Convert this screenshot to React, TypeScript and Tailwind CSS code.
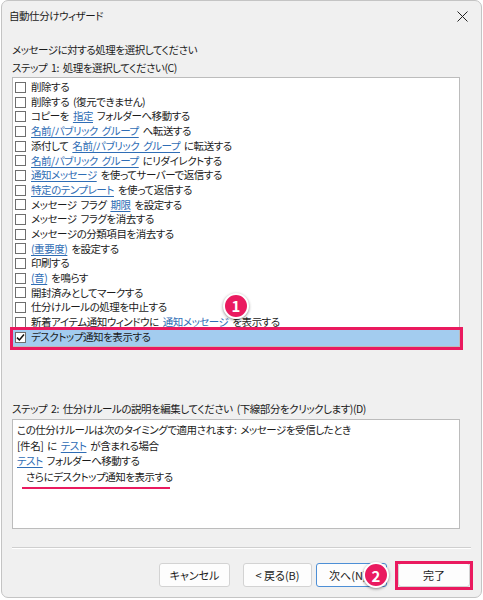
import React from "react";

type Part = { t: string; link?: boolean };

const rules: Part[][] = [
  [{ t: "削除する" }],
  [{ t: "削除する (復元できません)" }],
  [{ t: "コピーを " }, { t: "指定", link: true }, { t: " フォルダーへ移動する" }],
  [{ t: "名前/パブリック グループ", link: true }, { t: " へ転送する" }],
  [{ t: "添付して " }, { t: "名前/パブリック グループ", link: true }, { t: " に転送する" }],
  [{ t: "名前/パブリック グループ", link: true }, { t: " にリダイレクトする" }],
  [{ t: "通知メッセージ", link: true }, { t: " を使ってサーバーで返信する" }],
  [{ t: "特定のテンプレート", link: true }, { t: " を使って返信する" }],
  [{ t: "メッセージ フラグ " }, { t: "期限", link: true }, { t: " を設定する" }],
  [{ t: "メッセージ フラグを消去する" }],
  [{ t: "メッセージの分類項目を消去する" }],
  [{ t: "(重要度)", link: true }, { t: " を設定する" }],
  [{ t: "印刷する" }],
  [{ t: "(音)", link: true }, { t: " を鳴らす" }],
  [{ t: "開封済みとしてマークする" }],
  [{ t: "仕分けルールの処理を中止する" }],
  [{ t: "新着アイテム通知ウィンドウに " }, { t: "通知メッセージ", link: true }, { t: " を表示する" }],
];

const Parts = ({ parts }: { parts: Part[] }) => (
  <>
    {parts.map((p, i) =>
      p.link ? (
        <span key={i} className="text-[#2f6db5] underline underline-offset-[2px] decoration-[1px]">
          {p.t}
        </span>
      ) : (
        <span key={i}>{p.t}</span>
      )
    )}
  </>
);

const Checkbox = ({ checked }: { checked?: boolean }) => (
  <div className="w-[11px] h-[11px] border border-[#6e6e6e] bg-white shrink-0 flex items-center justify-center">
    {checked && (
      <svg width="9" height="9" viewBox="0 0 9 9">
        <path d="M1 4.6 L3.4 7 L8 1.6" fill="none" stroke="#111" strokeWidth="1.5" />
      </svg>
    )}
  </div>
);

const Badge = ({ n }: { n: string }) => (
  <div className="w-[26px] h-[26px] rounded-full bg-[#ea1a5f] border-2 border-white shadow-[0_1px_3px_rgba(0,0,0,0.45)] flex items-center justify-center text-white font-bold text-[15px] leading-none tracking-normal [word-spacing:0]">
    {n}
  </div>
);

export default function App() {
  return (
    <div className="w-[483px] h-[600px] bg-white text-[#1b1b1b] [font-family:'Noto_Sans_CJK_JP','Noto_Sans',sans-serif] [font-feature-settings:'palt'] text-[10.5px] tracking-[-0.45px] [word-spacing:2px]">
      <div className="ml-[1px] w-[481px] h-[598px] bg-[#f0f0f0] border border-[#c4c4c4] rounded-[7px] flex flex-col">
        {/* title bar */}
        <div className="h-[30px] flex items-center justify-between pl-[7px] pr-[13px] shrink-0">
          <span className="text-[10.5px]">自動仕分けウィザード</span>
          <svg width="11" height="11" viewBox="0 0 11 11">
            <path d="M0.5 0.5 L10.5 10.5 M10.5 0.5 L0.5 10.5" stroke="#222" strokeWidth="1" />
          </svg>
        </div>

        <div className="pl-[10px] flex flex-col">
          <div className="mt-[10px] h-[18px] leading-[18px]">メッセージに対する処理を選択してください</div>
          <div className="h-[18px] leading-[18px]">ステップ 1: 処理を選択してください(C)</div>

          {/* rule list */}
          <div className="w-[448px] h-[270px] bg-white border border-[#bcbcbc] pt-[2px] flex flex-col">
            {rules.map((r, i) => (
              <div key={i} className="h-[14.7px] flex items-center gap-[5px] pl-[2px] leading-none whitespace-nowrap">
                <Checkbox />
                <span>
                  <Parts parts={r} />
                </span>
              </div>
            ))}
            <div className="relative h-[16px] flex items-center gap-[5px] pl-[2px] bg-[#a3ccef] leading-none whitespace-nowrap">
              <Checkbox checked />
              <span>デスクトップ通知を表示する</span>
              <div className="absolute -left-[3px] -right-[4px] -top-[3px] -bottom-[4px] border-[3px] border-[#ea1a5f]" />
              <div className="absolute left-[210px] -top-[37px]">
                <Badge n="1" />
              </div>
            </div>
          </div>

          <div className="mt-[53px] h-[18px] leading-[18px]">
            ステップ 2: 仕分けルールの説明を編集してください (下線部分をクリックします)(D)
          </div>

          {/* description */}
          <div className="mt-[1px] w-[448px] h-[110px] bg-white border border-[#bcbcbc] pt-[2px] pl-[4px] flex flex-col">
            <div className="h-[15.5px] leading-[15.5px]">この仕分けルールは次のタイミングで適用されます: メッセージを受信したとき</div>
            <div className="h-[15.5px] leading-[15.5px]">
              [件名] に <span className="text-[#2f6db5] underline underline-offset-[2px]">テスト</span> が含まれる場合
            </div>
            <div className="h-[15.5px] leading-[15.5px]">
              <span className="text-[#2f6db5] underline underline-offset-[2px]">テスト</span> フォルダーへ移動する
            </div>
            <div className="h-[15.5px] leading-[15.5px] pl-[9px]">さらにデスクトップ通知を表示する</div>
            <div className="ml-[5px] mt-[3px] w-[148px] h-[2px] bg-[#ea1a5f]" />
          </div>

          <div className="mt-[18px] w-[459px] h-[1px] bg-[#cfcfcf]" />
          <div className="w-[459px] h-[1px] bg-white" />
        </div>

        {/* buttons */}
        <div className="mt-[14px] flex items-center pl-[157px] text-[11px] tracking-normal [word-spacing:0]">
          <button className="w-[71px] h-[24px] bg-[#fdfdfd] border border-[#d3d3d3] rounded-[3px]">キャンセル</button>
          <button className="ml-[13px] w-[69px] h-[24px] bg-[#fdfdfd] border border-[#d3d3d3] rounded-[3px]">&lt; 戻る(B)</button>
          <div className="relative ml-[4px]">
            <button className="w-[71px] h-[24px] bg-[#fdfdfd] border border-[#4d8fd6] rounded-[3px] text-left pl-[12px]">次へ(N)</button>
            <div className="absolute left-[47px] -top-[1px]">
              <Badge n="2" />
            </div>
          </div>
          <div className="relative ml-[11px]">
            <button className="w-[72px] h-[24px] bg-[#fdfdfd] border border-[#d3d3d3] rounded-[3px]">完了</button>
            <div className="absolute -left-[3px] -right-[3px] -top-[2px] -bottom-[3px] border-[3px] border-[#ea1a5f]" />
          </div>
        </div>
      </div>
    </div>
  );
}
